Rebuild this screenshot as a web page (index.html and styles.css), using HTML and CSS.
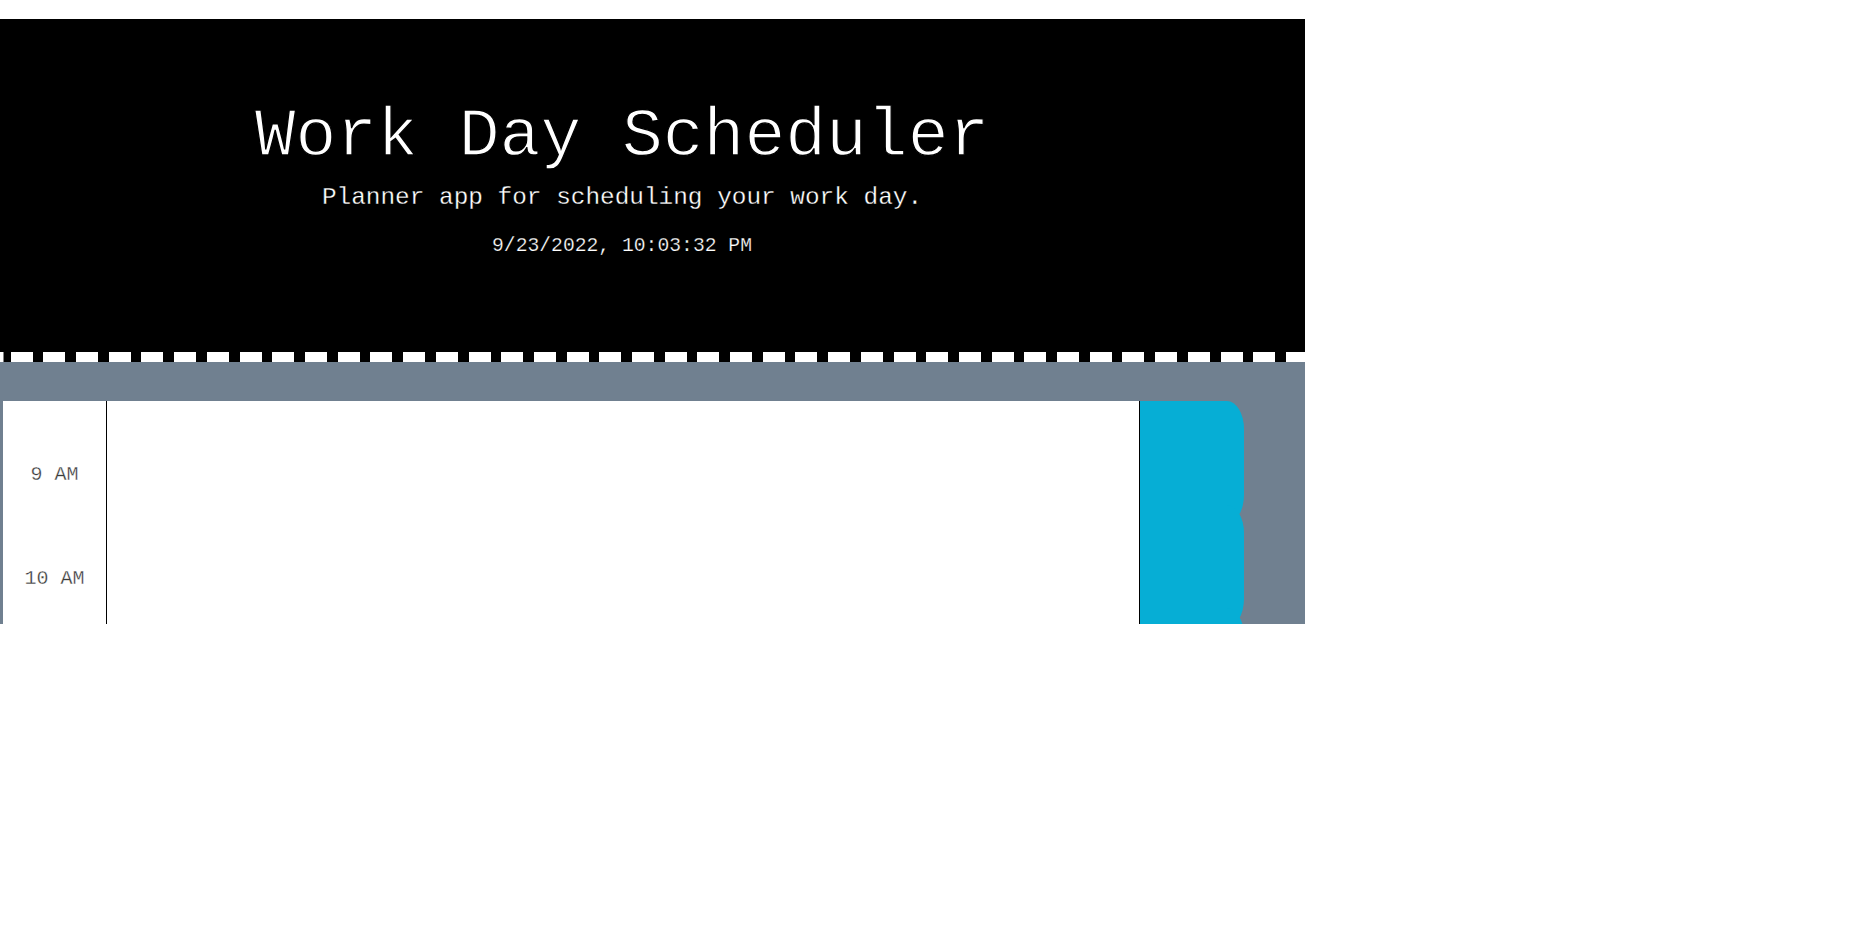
FILE: index.html
```html
<!DOCTYPE html>
<html lang="en">
<head>
<meta charset="utf-8">
<title>Work Day Scheduler</title>
<link rel="stylesheet" href="styles.css">
</head>
<body>
<div class="viewport">
  <header class="jumbotron">
    <div class="jumbotron-inner">
      <h1 class="title">Work Day Scheduler</h1>
      <p class="lead">Planner app for scheduling your work day.</p>
      <p class="current-day">9/23/2022, 10:03:32 PM</p>
    </div>
  </header>
  <div class="dash-strip"></div>
  <main class="container">
    <div class="row time-block">
      <div class="hour">9 AM</div>
      <textarea class="description"></textarea>
      <button class="saveBtn" aria-label="Save"></button>
    </div>
    <div class="row time-block">
      <div class="hour">10 AM</div>
      <textarea class="description"></textarea>
      <button class="saveBtn" aria-label="Save"></button>
    </div>
    <div class="row time-block">
      <div class="hour"></div>
      <textarea class="description"></textarea>
      <button class="saveBtn" aria-label="Save"></button>
    </div>
  </main>
</div>
</body>
</html>
```

FILE: styles.css
```css
* {
  box-sizing: border-box;
}

html,
body {
  margin: 0;
  padding: 0;
  background: #ffffff;
}

body {
  font-family: "Liberation Mono", "DejaVu Sans Mono", monospace;
  line-height: 1;
}

.viewport {
  margin-top: 19px;
  width: 1305px;
  height: 605px;
  overflow: hidden;
  background: #708090;
}

.jumbotron {
  background: #000000;
  color: #ffffff;
  height: 333px;
  padding-top: 84px;
}

.jumbotron-inner {
  width: 1244px;
  text-align: center;
}

.title {
  margin: 0;
  font-size: 68px;
  line-height: 68px;
  font-weight: normal;
  -webkit-text-stroke: 1.3px #000000;
}

.lead {
  margin: 15px 0 0;
  font-size: 24.4px;
  line-height: 24.4px;
  -webkit-text-stroke: 0.3px #000000;
}

.current-day {
  margin: 27px 0 0;
  font-size: 19.7px;
  line-height: 19.7px;
  -webkit-text-stroke: 0.25px #000000;
}

.dash-strip {
  height: 10px;
  background:
    linear-gradient(#ffffff, #ffffff) 0 0 / 3.5px 100% no-repeat,
    repeating-linear-gradient(to right, #000000 0 10.7px, #ffffff 10.7px 32.7px);
}

.container {
  padding: 39px 0 0 3px;
  width: 1244px;
}

.row {
  display: flex;
  height: 103.5px;
}

.hour {
  width: 104px;
  flex: none;
  background: #ffffff;
  border-right: 1px solid #000000;
  color: #3a3a3a;
  text-align: center;
  font-size: 20px;
  line-height: 20px;
  padding-top: 64px;
  -webkit-text-stroke: 0.3px #ffffff;
}

.description {
  flex: 1;
  min-width: 0;
  height: 100%;
  margin: 0;
  padding: 10px;
  border: none;
  resize: none;
  background: #ffffff;
  font-family: inherit;
}

.saveBtn {
  flex: none;
  align-self: flex-start;
  width: 105px;
  height: 122px;
  margin: 0;
  padding: 0;
  border: none;
  border-left: 1px solid #000000;
  border-radius: 0 17px 17px 0 / 0 28px 28px 0;
  background: #06aed5;
}
```
